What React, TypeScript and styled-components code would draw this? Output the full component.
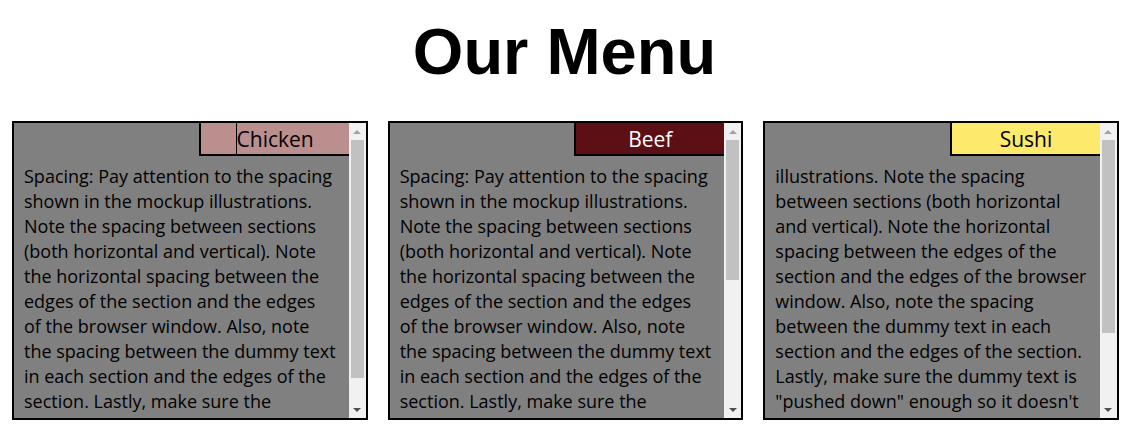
import React from "react";
import styled, { createGlobalStyle } from "styled-components";

const GlobalStyle = createGlobalStyle`
  html, body { margin: 0; padding: 0; background: #ffffff; }
  body { font-family: "Open Sans", "Noto Sans", sans-serif; }
`;

const Page = styled.main`
  display: flex;
  flex-direction: column;
`;

const Title = styled.h1`
  margin: 12px 0 0;
  padding-left: 5px;
  height: 109px;
  font-family: "Liberation Sans", Arial, sans-serif;
  font-weight: 700;
  font-size: 65px;
  line-height: 80px;
  text-align: center;
  color: #000;
`;

const Row = styled.div`
  display: grid;
  grid-template-columns: repeat(3, 1fr);
  column-gap: 20px;
  padding: 0 5px 0 12px;
`;

const Section = styled.section`
  box-sizing: border-box;
  height: 299px;
  border: 2px solid #000;
  background: #808080;
  display: flex;
`;

const Viewport = styled.div`
  flex: 1;
  min-width: 0;
  overflow: hidden;
`;

const Header = styled.div`
  display: flex;
  justify-content: flex-end;
  background: #808080;
`;

const Label = styled.div<{ $bg: string; $fg: string }>`
  box-sizing: border-box;
  width: 150px;
  height: 33px;
  border-left: 2px solid #000;
  border-bottom: 2px solid #000;
  background: ${(p) => p.$bg};
  color: ${(p) => p.$fg};
  display: flex;
  align-items: stretch;
  justify-content: center;
  font-size: 21px;
  line-height: 33px;
`;

const LabelText = styled.span<{ $rule?: boolean }>`
  border-left: ${(p) => (p.$rule ? "1px solid #000" : "none")};
`;

const Body = styled.p`
  margin: 8px 0 0;
  padding: 0 12px 10px 10px;
  font-size: 18px;
  line-height: 25px;
  color: #000;
`;

const ScrollBar = styled.div`
  width: 17px;
  flex: none;
  background: #f1f1f1;
  display: flex;
  flex-direction: column;
`;

const Arrow = styled.div<{ $down?: boolean }>`
  height: 17px;
  flex: none;
  display: flex;
  align-items: center;
  justify-content: center;

  &::before {
    content: "";
    width: 0;
    height: 0;
    border-left: 4px solid transparent;
    border-right: 4px solid transparent;
    ${(p) =>
      p.$down
        ? "border-top: 4px solid #505050;"
        : "border-bottom: 4px solid #a3a3a3;"}
  }
`;

const Track = styled.div`
  flex: 1;
  padding: 0 2px;
`;

const Thumb = styled.div`
  background: #c1c1c1;
`;

const base =
  'Spacing: Pay attention to the spacing shown in the mockup illustrations. Note the spacing between sections (both horizontal and vertical). Note the horizontal spacing between the edges of the section and the edges of the browser window. Also, note the spacing between the dummy text in each section and the edges of the section. Lastly, make sure the dummy text is "pushed down" enough so it doesn\'t overlap with the section title.';

const sushi =
  'illustrations. Note the spacing between sections (both horizontal and vertical). Note the horizontal spacing between the edges of the section and the edges of the browser window. Also, note the spacing between the dummy text in each section and the edges of the section. Lastly, make sure the dummy text is "pushed down" enough so it doesn\'t overlap with the section title.';

const items = [
  { name: "Chicken", bg: "#bc8f8f", fg: "#000", rule: true, text: base, thumb: 238 },
  { name: "Beef", bg: "#5c1015", fg: "#fff", rule: false, text: base, thumb: 140 },
  { name: "Sushi", bg: "#fde96c", fg: "#000", rule: false, text: sushi, thumb: 193 },
];

export default function App() {
  return (
    <Page>
      <GlobalStyle />
      <Title>Our Menu</Title>
      <Row>
        {items.map((it) => (
          <Section key={it.name}>
            <Viewport>
              <Header>
                <Label $bg={it.bg} $fg={it.fg}>
                  <LabelText $rule={it.rule}>{it.name}</LabelText>
                </Label>
              </Header>
              <Body>{it.text}</Body>
            </Viewport>
            <ScrollBar aria-hidden="true">
              <Arrow />
              <Track>
                <Thumb style={{ height: it.thumb }} />
              </Track>
              <Arrow $down />
            </ScrollBar>
          </Section>
        ))}
      </Row>
    </Page>
  );
}
